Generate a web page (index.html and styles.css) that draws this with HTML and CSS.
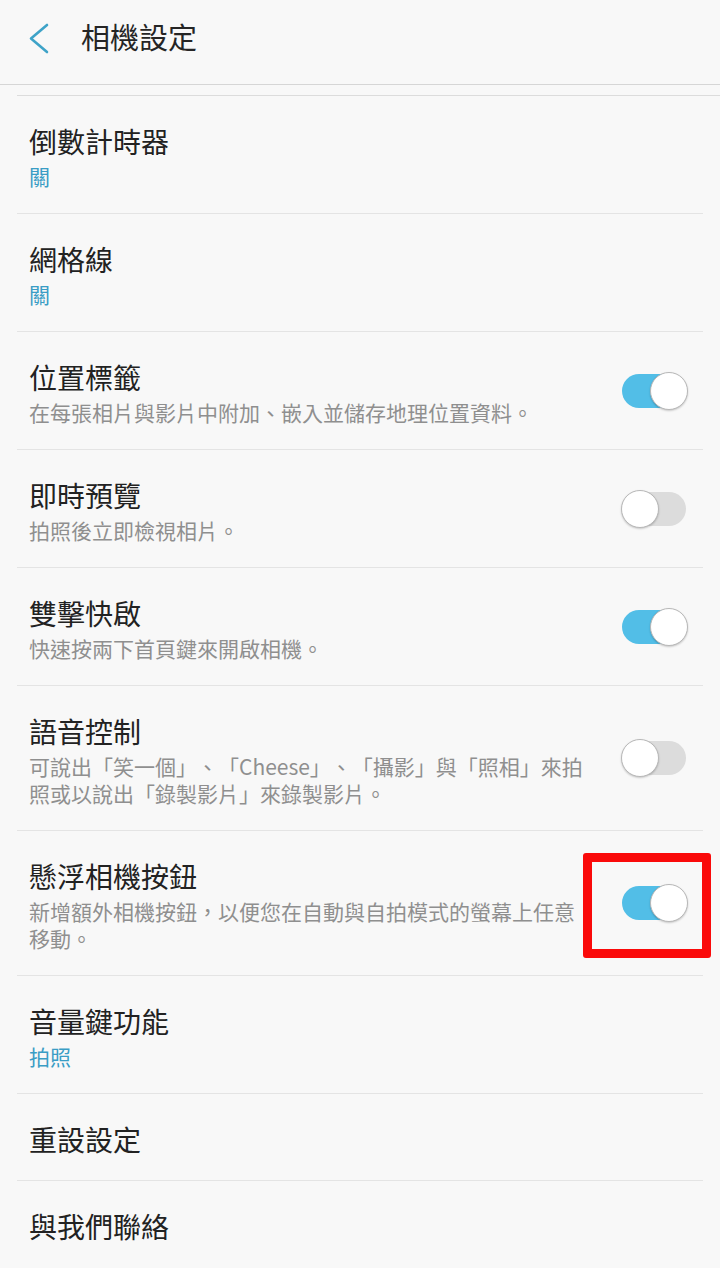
FILE: index.html
```html
<!DOCTYPE html>
<html lang="zh-Hant">
<head>
<meta charset="utf-8">
<link rel="stylesheet" href="styles.css">
</head>
<body>
<header class="appbar">
  <svg class="back" width="24" height="34" viewBox="0 0 24 34"><polyline points="20,3 4,16.5 20,30" fill="none" stroke="#3ea3c8" stroke-width="2.6" stroke-linecap="round" stroke-linejoin="round"/></svg>
  <h1 class="title">相機設定</h1>
</header>
<div class="list-top"></div>
<ul class="list">
  <li class="row">
    <div class="text"><div class="label">倒數計時器</div><div class="value">關</div></div>
  </li>
  <li class="row">
    <div class="text"><div class="label">網格線</div><div class="value">關</div></div>
  </li>
  <li class="row">
    <div class="text"><div class="label">位置標籤</div><div class="desc">在每張相片與影片中附加、嵌入並儲存地理位置資料。</div></div>
    <span class="switch on"><span class="track"></span><span class="knob"></span></span>
  </li>
  <li class="row">
    <div class="text"><div class="label">即時預覽</div><div class="desc">拍照後立即檢視相片。</div></div>
    <span class="switch"><span class="track"></span><span class="knob"></span></span>
  </li>
  <li class="row">
    <div class="text"><div class="label">雙擊快啟</div><div class="desc">快速按兩下首頁鍵來開啟相機。</div></div>
    <span class="switch on"><span class="track"></span><span class="knob"></span></span>
  </li>
  <li class="row">
    <div class="text"><div class="label">語音控制</div><div class="desc">可說出「笑一個」、「Cheese」、「攝影」與「照相」來拍照或以說出「錄製影片」來錄製影片。</div></div>
    <span class="switch"><span class="track"></span><span class="knob"></span></span>
  </li>
  <li class="row">
    <div class="text"><div class="label">懸浮相機按鈕</div><div class="desc">新增額外相機按鈕，以便您在自動與自拍模式的螢幕上任意移動。</div></div>
    <span class="switch on"><span class="track"></span><span class="knob"></span></span>
  </li>
  <li class="row">
    <div class="text"><div class="label">音量鍵功能</div><div class="value">拍照</div></div>
  </li>
  <li class="row single">
    <div class="text"><div class="label">重設設定</div></div>
  </li>
  <li class="row single last">
    <div class="text"><div class="label">與我們聯絡</div></div>
  </li>
</ul>
<div class="highlight"></div>
</body>
</html>
```
FILE: styles.css
```css
html, body {
  margin: 0;
  padding: 0;
}
body {
  width: 720px;
  height: 1268px;
  overflow: hidden;
  background: #f8f8f8;
  font-family: "Noto Sans CJK TC", "Noto Sans", "Liberation Sans", sans-serif;
  text-spacing-trim: space-all;
  position: relative;
}
.appbar {
  height: 84px;
  border-bottom: 1px solid #d6d6d6;
  display: flex;
  align-items: flex-start;
  box-sizing: content-box;
}
.back {
  margin-left: 27px;
  margin-top: 22px;
}
.title {
  margin: 15px 0 0 30px;
  font-size: 29px;
  line-height: 42px;
  font-weight: 400;
  color: #252525;
}
.list-top {
  margin-top: 10px;
  margin-left: 17px;
  border-top: 1px solid #dcdcdc;
}
.list {
  list-style: none;
  margin: 0;
  padding: 0;
}
.row {
  margin: 0 17px;
  padding: 23px 0 23px 12px;
  border-bottom: 1px solid #e4e4e4;
  display: flex;
  align-items: center;
}
.row.single {
  padding-bottom: 19px;
}
.row.last {
  border-bottom: none;
}
.text {
  width: 561px;
}
.label {
  font-size: 28px;
  line-height: 44px;
  color: #222;
}
.value {
  font-size: 21px;
  line-height: 27px;
  color: #3a9dc5;
}
.desc {
  font-size: 21px;
  line-height: 27px;
  color: #8f8f8f;
}
.switch {
  margin-left: auto;
  margin-right: 15px;
  width: 66px;
  height: 38px;
  position: relative;
  flex: none;
}
.track {
  position: absolute;
  left: 0;
  top: 2px;
  width: 64px;
  height: 34px;
  border-radius: 17px;
  background: #dcdcdc;
}
.switch.on .track {
  background: #52bee7;
}
.knob {
  position: absolute;
  top: 0;
  left: -1px;
  width: 38px;
  height: 38px;
  box-sizing: border-box;
  border-radius: 50%;
  background: #fff;
  border: 1px solid #b8b8b8;
  box-shadow: 0 1px 2px rgba(0,0,0,0.2);
}
.switch.on .knob {
  left: auto;
  right: 0;
}
.highlight {
  position: absolute;
  left: 583px;
  top: 853px;
  width: 128px;
  height: 105px;
  box-sizing: border-box;
  border: 9px solid #fa0a0a;
  border-radius: 3px;
}
```
